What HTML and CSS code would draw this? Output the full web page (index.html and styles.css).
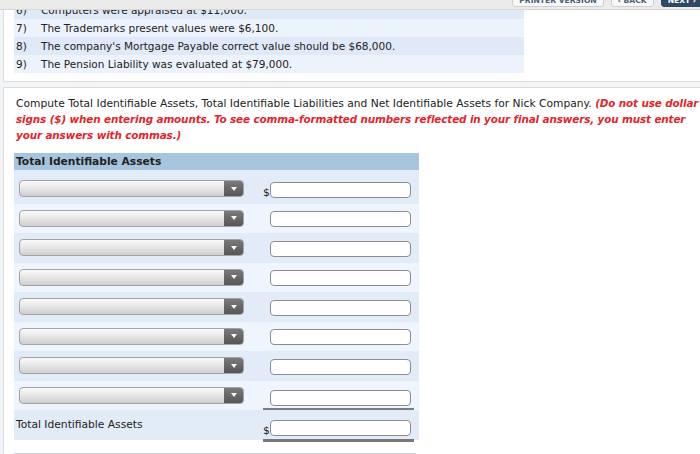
FILE: index.html
```html
<!DOCTYPE html>
<html lang="en">
<head>
  <meta charset="UTF-8">
  <title>Question</title>
  <link rel="stylesheet" href="styles.css">
</head>
<body>

  <div class="topbar">
    <a class="btn">Printer Version</a>
    <a class="btn">&lsaquo; Back</a>
    <a class="btn btn-next">Next &rsaquo;</a>
  </div>

  <div class="panel panel-list">
    <table class="facts">
      <tr class="alt"><td class="num">6)</td><td>Computers were appraised at $11,000.</td></tr>
      <tr><td class="num">7)</td><td>The Trademarks present values were $6,100.</td></tr>
      <tr class="alt"><td class="num">8)</td><td>The company's Mortgage Payable correct value should be $68,000.</td></tr>
      <tr><td class="num">9)</td><td>The Pension Liability was evaluated at $79,000.</td></tr>
    </table>
  </div>

  <div class="panel panel-question">
    <p class="prompt">
      Compute Total Identifiable Assets, Total Identifiable Liabilities and Net Identifiable Assets for Nick Company.
      <span class="note">(Do not use dollar signs ($) when entering amounts. To see comma-formatted numbers reflected in your final answers, you must enter your answers with commas.)</span>
    </p>

    <div class="grid">
      <div class="grid-head">Total Identifiable Assets</div>

      <div class="grid-row odd first">
        <div class="pick"><span class="pick-arrow"></span></div>
        <div class="amount"><span class="cur">$</span><span class="field"></span></div>
      </div>
      <div class="grid-row">
        <div class="pick"><span class="pick-arrow"></span></div>
        <div class="amount"><span class="cur"></span><span class="field"></span></div>
      </div>
      <div class="grid-row odd">
        <div class="pick"><span class="pick-arrow"></span></div>
        <div class="amount"><span class="cur"></span><span class="field"></span></div>
      </div>
      <div class="grid-row">
        <div class="pick"><span class="pick-arrow"></span></div>
        <div class="amount"><span class="cur"></span><span class="field"></span></div>
      </div>
      <div class="grid-row odd">
        <div class="pick"><span class="pick-arrow"></span></div>
        <div class="amount"><span class="cur"></span><span class="field"></span></div>
      </div>
      <div class="grid-row">
        <div class="pick"><span class="pick-arrow"></span></div>
        <div class="amount"><span class="cur"></span><span class="field"></span></div>
      </div>
      <div class="grid-row odd">
        <div class="pick"><span class="pick-arrow"></span></div>
        <div class="amount"><span class="cur"></span><span class="field"></span></div>
      </div>
      <div class="grid-row">
        <div class="pick"><span class="pick-arrow"></span></div>
        <div class="amount subtotal"><span class="cur"></span><span class="field"></span></div>
      </div>
      <div class="grid-row odd">
        <div class="label">Total Identifiable Assets</div>
        <div class="amount total"><span class="cur">$</span><span class="field"></span></div>
      </div>
    </div>

    <div class="grid-next"></div>
  </div>

</body>
</html>
```

FILE: styles.css
```css
html, body {
  margin: 0;
  background: #f3f4f6;
  font-family: "DejaVu Sans", Verdana, sans-serif;
  font-size: 10.7px;
  color: #222;
}

body {
  padding-left: 3px;
  overflow: hidden;
  height: 454px;
}

.topbar {
  position: fixed;
  top: 0;
  left: 0;
  right: 0;
  height: 9px;
  overflow: hidden;
  display: flex;
  justify-content: flex-end;
  align-items: flex-end;
  gap: 7px;
  background: #ebebeb;
  border-bottom: 1px solid #d6d6d6;
  z-index: 5;
}

.btn {
  display: block;
  height: 14px;
  line-height: 17px;
  overflow: hidden;
  margin-bottom: 2px;
  padding: 0 6px;
  border: 1px solid #cfcfcf;
  border-radius: 3px;
  background: #f8f8f8;
  color: #4d5e73;
  font-weight: bold;
  font-size: 7.6px;
  text-transform: uppercase;
}

.btn-next {
  background: #2f4963;
  border-color: #2f4963;
  color: #fff;
  margin-right: -3px;
}

.panel {
  background: #fff;
  border-left: 1px solid #d9dde2;
}

.panel-list {
  padding: 1px 10px 8px;
  border-bottom: 1px solid #d9dde2;
}

.facts {
  border-collapse: collapse;
  width: 510px;
  font-size: 10.5px;
}

.facts td {
  height: 18px;
  padding: 0;
  background: #edf3fc;
  white-space: nowrap;
}

.facts .alt td {
  background: #dfe9f8;
}

.facts .num {
  width: 25px;
  padding-left: 2px;
}

.panel-question {
  margin-top: 5px;
  border-top: 1px solid #d9dde2;
  padding: 8px 2px 0 10px;
}

.prompt {
  margin: 0 -8px 9px 2px;
  line-height: 16px;
}

.note {
  color: #e1262b;
  font-weight: bold;
  font-style: italic;
  font-size: 10.4px;
  line-height: 14px;
  letter-spacing: -0.12px;
}

.grid {
  width: 405px;
}

.grid-head {
  height: 17px;
  line-height: 17px;
  padding-left: 2px;
  background: #a8c5df;
  font-weight: bold;
}

.grid-row {
  display: flex;
  align-items: center;
  height: 29.5px;
  background: #eef5fe;
}

.grid-row.odd {
  background: #e2ecf9;
}

.grid-row.first {
  height: 33.5px;
  padding-top: 4px;
  box-sizing: border-box;
}

.pick {
  width: 223px;
  height: 15px;
  margin-left: 5px;
  border: 1px solid #a3a3a3;
  border-radius: 4px;
  background: linear-gradient(#fafafa, #e6e6e6 50%, #cfcfcf);
  display: flex;
  justify-content: flex-end;
  overflow: hidden;
}

.pick-arrow {
  width: 19px;
  height: 15px;
  background: linear-gradient(#7a7a7a, #565656);
  display: flex;
  align-items: center;
  justify-content: center;
}

.pick-arrow::after {
  content: "";
  border-left: 3px solid transparent;
  border-right: 3px solid transparent;
  border-top: 4px solid #fff;
}

.label {
  width: 247px;
  padding-left: 2px;
}

.amount {
  display: flex;
  align-items: flex-end;
  height: 100%;
  box-sizing: border-box;
  padding-top: 7px;
  padding-bottom: 6px;
  margin-left: 19px;
}

.label + .amount {
  margin-left: 0;
}

.cur {
  width: 7px;
  line-height: 11px;
}

.field {
  display: block;
  width: 139px;
  height: 14px;
  border: 1.5px solid #8c8c8c;
  border-radius: 4px;
  background: #fff;
}

.amount.subtotal,
.amount.total {
  padding-right: 3px;
}

.amount.subtotal {
  border-bottom: 2px solid #7d7d7d;
  padding-bottom: 2px;
  margin-bottom: -2px;
  height: auto;
}

.amount.total {
  border-bottom: 3px solid #777;
  padding-bottom: 3px;
  margin-bottom: -5px;
  height: auto;
}

.grid-next {
  width: 402px;
  height: 6px;
  margin-top: 13px;
  background: #c6d9e4;
}
```
